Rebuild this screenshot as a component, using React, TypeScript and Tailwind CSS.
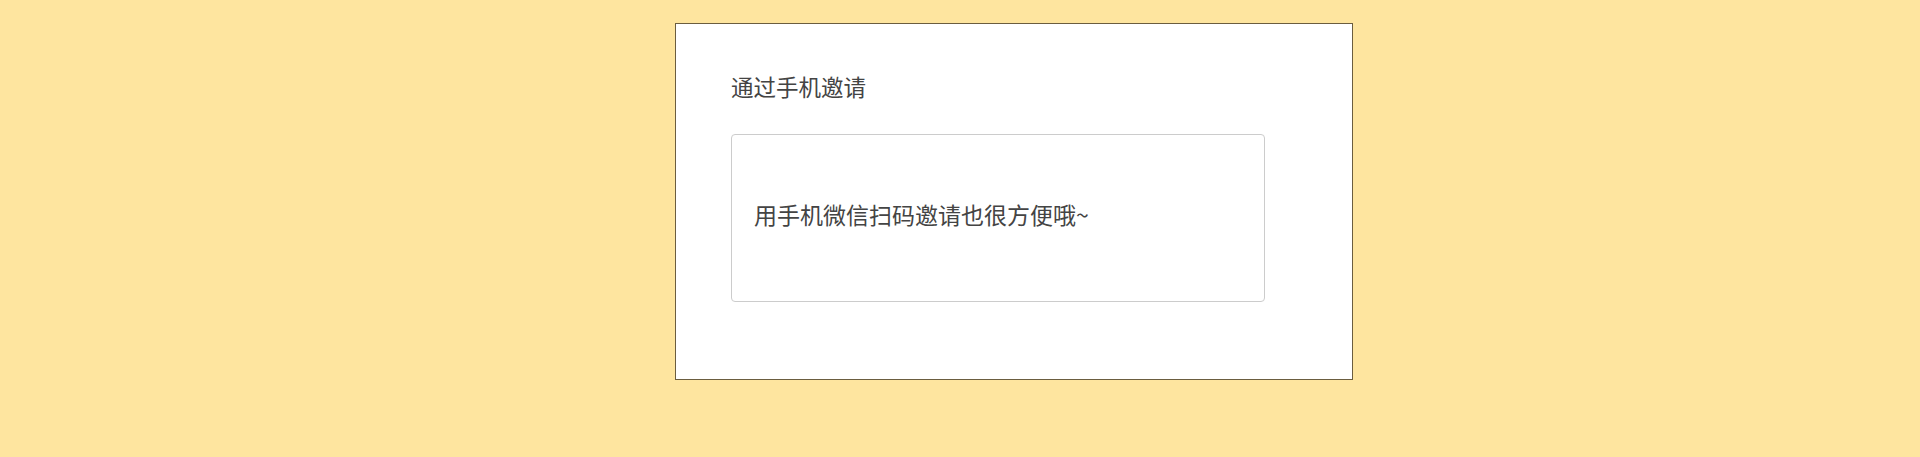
import * as React from 'react';

const App: React.FunctionComponent = () => {
  return (
    <div className="min-h-[457px] w-full bg-[#fee59f] pt-[23px]" style={{ fontFamily: '"Noto Sans CJK SC", "Noto Sans", sans-serif' }}>
      <div className="ml-[675px] w-[678px] h-[357px] border border-[#6b5d3f] bg-white pl-[55px] pt-[47px]">
        <h2 className="text-[22.5px] leading-[30px] text-[#444]">通过手机邀请</h2>
        <div className="mt-[33px] w-[534px] h-[168px] rounded-[4px] border border-[#cccccc] flex items-center pl-[22px] pb-[8px]">
          <p className="text-[23px] text-[#444]">用手机微信扫码邀请也很方便哦~</p>
        </div>
      </div>
    </div>
  );
};

export default App;
